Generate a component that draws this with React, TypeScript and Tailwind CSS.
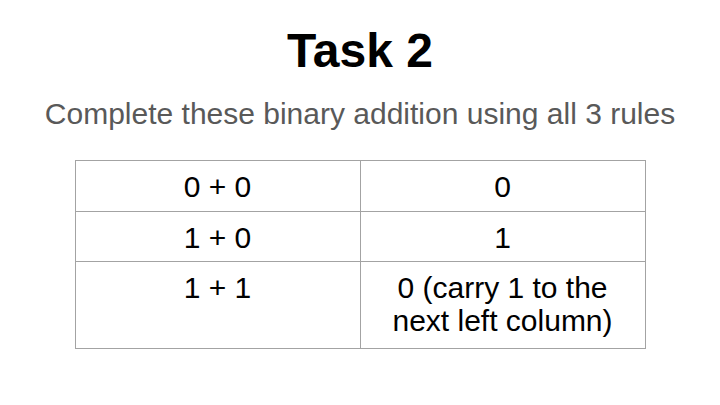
import React from 'react';

const rows = [
  { sum: '0 + 0', result: '0', pb: 'pb-[8px]' },
  { sum: '1 + 0', result: '1', pb: 'pb-[7px]' },
  { sum: '1 + 1', result: '0 (carry 1 to the next left column)', pb: 'pb-[11px]' },
];

const App = () => {
  return (
    <div className="w-[720px] h-[405px] bg-white flex flex-col items-center pt-[23px] font-['Liberation_Sans',Arial,sans-serif]">
      <h1 className="text-[48px] leading-[55px] font-bold text-black">Task 2</h1>
      <p className="mt-[19px] text-[30px] leading-[34px] text-[#595959] whitespace-nowrap">
        Complete these binary addition using all 3 rules
      </p>
      <table className="mt-[29px] w-[571px] border-collapse table-fixed text-[30px] leading-[33px] text-black">
        <tbody>
          {rows.map((r) => (
            <tr key={r.sum}>
              <td className={`w-[285px] border border-[#a3a3a3] align-top text-center px-3 pt-[9px] ${r.pb}`}>
                {r.sum}
              </td>
              <td className={`border border-[#a3a3a3] align-top text-center px-6 pt-[9px] ${r.pb}`}>
                {r.result}
              </td>
            </tr>
          ))}
        </tbody>
      </table>
    </div>
  );
};

export default App;
